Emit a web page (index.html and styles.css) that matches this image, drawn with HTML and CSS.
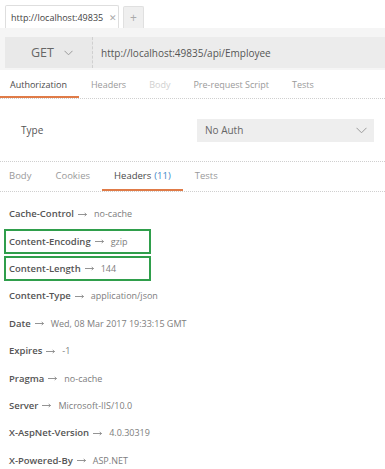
FILE: index.html
```html
<!DOCTYPE html>
<html>
<head>
<meta charset="utf-8">
<link rel="stylesheet" href="styles.css">
</head>
<body>
<div class="tabbar">
  <div class="tab"><span class="tab-title">http://localhost:49835</span><span class="tab-close">✕</span></div>
  <div class="tab-add">+</div>
</div>
<div class="reqbar">
  <div class="method"><span>GET</span>
    <svg class="chev" width="9" height="6" viewBox="0 0 9 6"><path d="M0.5 0.8 L4.5 4.8 L8.5 0.8" fill="none" stroke="#9a9a9a" stroke-width="1"/></svg>
  </div>
  <div class="url">http://localhost:49835/api/Employee</div>
</div>
<div class="tabs auth-tabs">
  <div class="t active">Authorization</div>
  <div class="t light">Headers</div>
  <div class="t faint">Body</div>
  <div class="t light">Pre-request Script</div>
  <div class="t light">Tests</div>
</div>
<div class="typerow">
  <div class="type-label">Type</div>
  <div class="select"><span>No Auth</span>
    <svg class="chev" width="11" height="7" viewBox="0 0 11 7"><path d="M0.5 0.8 L5.5 5.8 L10.5 0.8" fill="none" stroke="#9a9a9a" stroke-width="1"/></svg>
  </div>
</div>
<div class="tabs resp-tabs">
  <div class="t light">Body</div>
  <div class="t light">Cookies</div>
  <div class="t active">Headers <span class="count">(11)</span></div>
  <div class="t light">Tests</div>
</div>
<div class="headers">
  <div class="hrow"><span class="k">Cache-Control</span><svg class="arr" width="9" height="5" viewBox="0 0 9 5"><path d="M0 2.5 H8.5 M6.7 1 L8.5 2.5 L6.7 4" fill="none" stroke="#888" stroke-width="0.9"/></svg><span class="v">no-cache</span></div>
  <div class="hrow hl"><div class="hbox"><span class="k">Content-Encoding</span><svg class="arr" width="9" height="5" viewBox="0 0 9 5"><path d="M0 2.5 H8.5 M6.7 1 L8.5 2.5 L6.7 4" fill="none" stroke="#888" stroke-width="0.9"/></svg><span class="v">gzip</span></div></div>
  <div class="hrow hl"><div class="hbox"><span class="k">Content-Length</span><svg class="arr" width="9" height="5" viewBox="0 0 9 5"><path d="M0 2.5 H8.5 M6.7 1 L8.5 2.5 L6.7 4" fill="none" stroke="#888" stroke-width="0.9"/></svg><span class="v">144</span></div></div>
  <div class="hrow"><span class="k">Content-Type</span><svg class="arr" width="9" height="5" viewBox="0 0 9 5"><path d="M0 2.5 H8.5 M6.7 1 L8.5 2.5 L6.7 4" fill="none" stroke="#888" stroke-width="0.9"/></svg><span class="v">application/json</span></div>
  <div class="hrow"><span class="k">Date</span><svg class="arr" width="9" height="5" viewBox="0 0 9 5"><path d="M0 2.5 H8.5 M6.7 1 L8.5 2.5 L6.7 4" fill="none" stroke="#888" stroke-width="0.9"/></svg><span class="v">Wed, 08 Mar 2017 19:33:15 GMT</span></div>
  <div class="hrow"><span class="k">Expires</span><svg class="arr" width="9" height="5" viewBox="0 0 9 5"><path d="M0 2.5 H8.5 M6.7 1 L8.5 2.5 L6.7 4" fill="none" stroke="#888" stroke-width="0.9"/></svg><span class="v">-1</span></div>
  <div class="hrow"><span class="k">Pragma</span><svg class="arr" width="9" height="5" viewBox="0 0 9 5"><path d="M0 2.5 H8.5 M6.7 1 L8.5 2.5 L6.7 4" fill="none" stroke="#888" stroke-width="0.9"/></svg><span class="v">no-cache</span></div>
  <div class="hrow"><span class="k">Server</span><svg class="arr" width="9" height="5" viewBox="0 0 9 5"><path d="M0 2.5 H8.5 M6.7 1 L8.5 2.5 L6.7 4" fill="none" stroke="#888" stroke-width="0.9"/></svg><span class="v">Microsoft-IIS/10.0</span></div>
  <div class="hrow"><span class="k">X-AspNet-Version</span><svg class="arr" width="9" height="5" viewBox="0 0 9 5"><path d="M0 2.5 H8.5 M6.7 1 L8.5 2.5 L6.7 4" fill="none" stroke="#888" stroke-width="0.9"/></svg><span class="v">4.0.30319</span></div>
  <div class="hrow"><span class="k">X-Powered-By</span><svg class="arr" width="9" height="5" viewBox="0 0 9 5"><path d="M0 2.5 H8.5 M6.7 1 L8.5 2.5 L6.7 4" fill="none" stroke="#888" stroke-width="0.9"/></svg><span class="v">ASP.NET</span></div>
</div>
</body>
</html>
```
FILE: styles.css
```css
* { box-sizing: border-box; }
html, body { margin: 0; padding: 0; background: #fff; }
body {
  font-family: "Open Sans", "Noto Sans", sans-serif;
  font-size: 10px;
  color: #555;
  width: 385px;
  height: 469px;
  overflow: hidden;
}
.tabbar {
  height: 28px;
  display: flex;
  align-items: flex-end;
  gap: 4px;
  padding-left: 5px;
}
.tab {
  width: 114px;
  height: 23px;
  border: 1px solid #dedede;
  border-bottom: none;
  border-radius: 2px 2px 0 0;
  background: #fff;
  display: flex;
  align-items: center;
  padding-left: 5px;
  font-size: 9px;
  color: #444;
}
.tab-title { white-space: nowrap; }
.tab-close { color: #aaa; font-size: 9px; margin-left: 6px; }
.tab-add {
  width: 21px;
  height: 22px;
  background: #efefef;
  border: 1px solid #e0e0e0;
  border-bottom: none;
  border-radius: 2px 2px 0 0;
  color: #aaa;
  font-size: 12px;
  display: flex;
  align-items: center;
  justify-content: center;
}
.reqbar {
  height: 42px;
  background: #f5f5f5;
  padding: 9px 0 2px 5px;
  display: flex;
}
.method {
  width: 88px;
  background: #e9e9e9;
  border-right: 1px dashed #d0d0d0;
  display: flex;
  align-items: center;
  padding-left: 26px;
  font-size: 12.5px;
  color: #666;
  gap: 10px;
}
.url {
  flex: 1;
  background: #ececec;
  display: flex;
  align-items: center;
  padding-left: 8px;
  font-size: 10px;
  color: #555;
}
.tabs {
  display: flex;
  border-bottom: 1px dotted #cfcfcf;
}
.t {
  display: flex;
  align-items: center;
  color: #555;
  border-bottom: 2px solid transparent;
  white-space: nowrap;
}
.t.active { border-bottom-color: #e07b47; color: #4a4a4a; }
.t.light { color: #9a9a9a; }
.t.faint { color: #d0d0d0; }
.auth-tabs { height: 29px; padding-top: 2px; }
.auth-tabs .t { font-size: 9px; padding: 0 11px 0 12px; }
.auth-tabs .t:first-child { padding: 0 12px 0 10px; }
.count { color: #3f86c8; margin-left: 3px; }
.typerow {
  height: 63px;
  display: flex;
  align-items: center;
  justify-content: space-between;
  padding: 0 11px 0 21px;
  border-bottom: 1px dotted #cfcfcf;
}
.type-label { font-size: 10px; color: #555; }
.select {
  width: 177px;
  height: 23px;
  background: #eeeeee;
  display: flex;
  align-items: center;
  justify-content: space-between;
  padding: 0 7px 0 8px;
  font-size: 10px;
  color: #666;
}
.resp-tabs { height: 30px; }
.resp-tabs .t { font-size: 9.5px; padding: 0 12px; }
.resp-tabs .t:first-child { margin-left: -3px; }
.headers { padding-top: 8px; }
.hrow {
  height: 27.4px;
  display: flex;
  align-items: center;
  padding-left: 9px;
  white-space: nowrap;
}
.hrow.hl { padding-left: 4px; }
.hbox {
  width: 147px;
  height: 25px;
  border: 2px solid #2f9e4b;
  display: flex;
  align-items: center;
  padding-left: 3px;
}
.k { font-weight: 600; color: #555; font-size: 9.5px; }
.arr { margin-left: 4px; margin-top: 1px; flex: none; }
.v { color: #7d7d7d; margin-left: 7px; font-size: 9px; }
```
